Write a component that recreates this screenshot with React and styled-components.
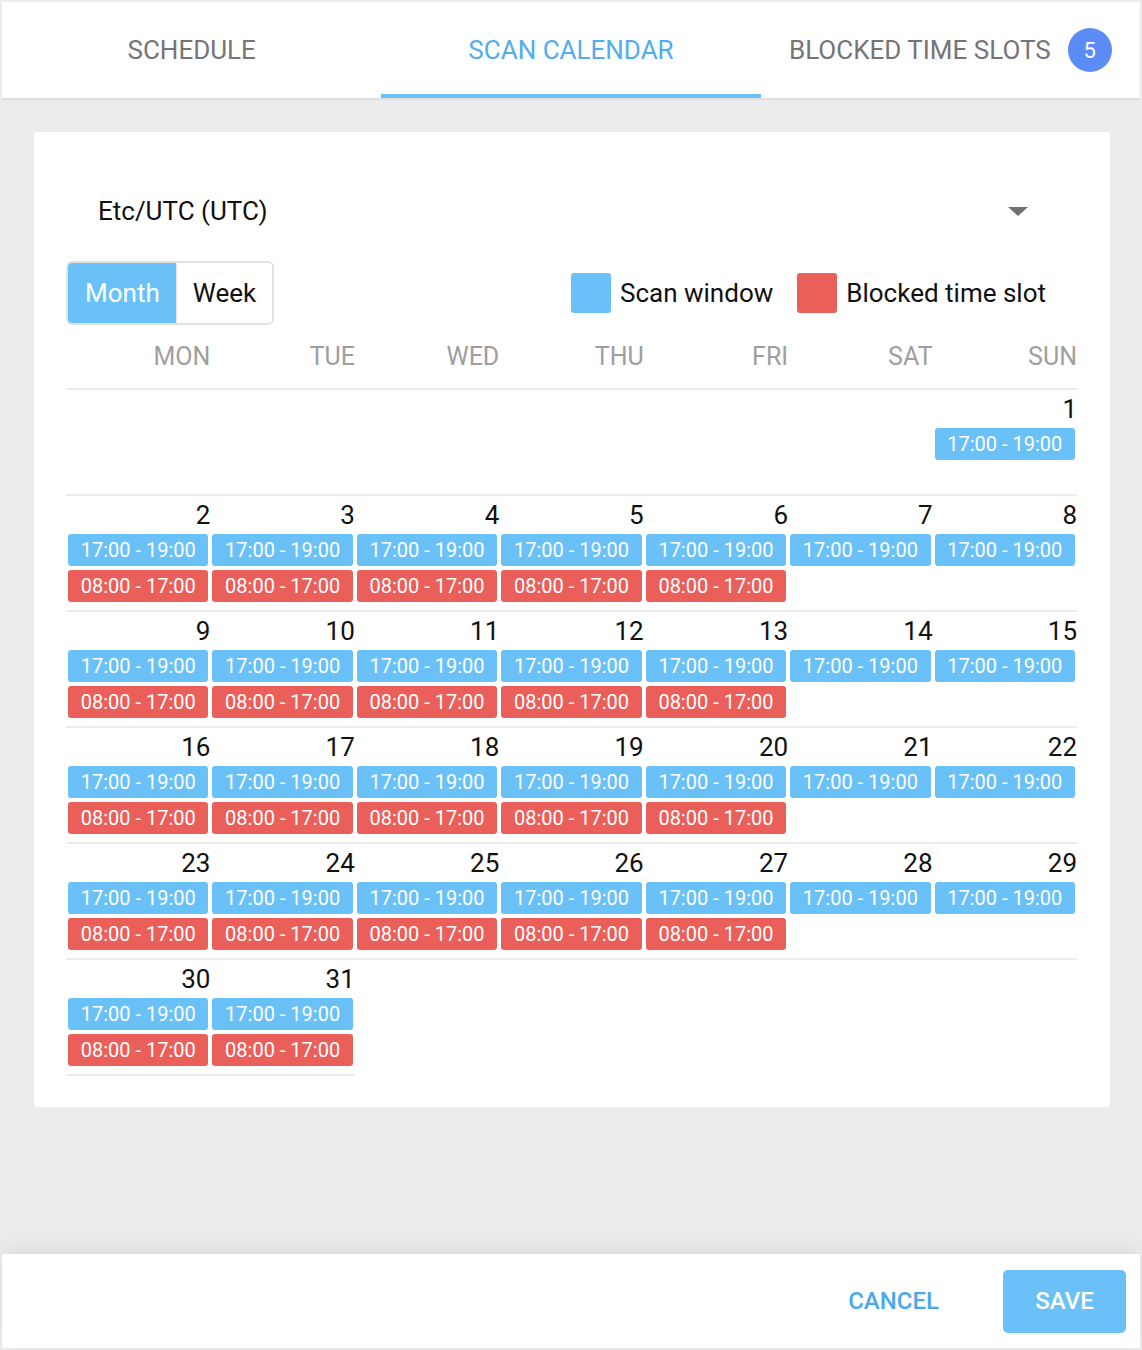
import React from "react";
import styled, { createGlobalStyle } from "styled-components";

const GlobalStyle = createGlobalStyle`
  * { box-sizing: border-box; }
  body {
    margin: 0;
    background: #ececec;
    font-family: Roboto, "Liberation Sans", Arial, sans-serif;
  }
`;

const BLUE = "#6ac1f8";
const RED = "#eb5f5a";

const Page = styled.div`
  height: 100vh;
  padding: 2px;
  display: flex;
  flex-direction: column;
`;

const TabBar = styled.div`
  display: flex;
  background: white;
  height: 98px;
  border-bottom: 2px solid #dedede;
`;

const Tab = styled.div`
  flex: 1;
  display: flex;
  align-items: center;
  justify-content: center;
  font-size: 26px;
  text-transform: uppercase;
  color: ${(p) => (p.active ? "#52acee" : "#757575")};
  border-bottom: 4px solid ${(p) => (p.active ? BLUE : "transparent")};
  padding-top: 4px;
`;

const Badge = styled.span`
  width: 44px;
  height: 44px;
  border-radius: 50%;
  background: #5b8cf5;
  color: white;
  font-size: 22px;
  display: flex;
  align-items: center;
  justify-content: center;
  margin-left: 17px;
`;

const Main = styled.div`
  flex: 1;
  padding: 32px 30px 0 32px;
`;

const Card = styled.div`
  background: white;
  border-radius: 4px;
  padding: 48px 33px 31px 32px;
`;

const Select = styled.div`
  height: 62px;
  display: flex;
  align-items: center;
  justify-content: space-between;
  padding: 0 49px 0 32px;
  font-size: 26px;
  color: #111;
`;

const Caret = styled.span`
  width: 0;
  height: 0;
  border-left: 10px solid transparent;
  border-right: 10px solid transparent;
  border-top: 9px solid #707070;
`;

const Controls = styled.div`
  margin-top: 19px;
  display: flex;
  align-items: center;
  justify-content: space-between;
`;

const Toggle = styled.div`
  display: flex;
  border: 2px solid #e2e2e2;
  border-radius: 6px;
  overflow: hidden;
  height: 64px;
`;

const ToggleButton = styled.div`
  display: flex;
  align-items: center;
  padding: 0 16px 0 ${(p) => (p.active ? 17 : 16)}px;
  font-size: 26px;
  background: ${(p) => (p.active ? BLUE : "white")};
  color: ${(p) => (p.active ? "white" : "#111")};
  & + & {
    border-left: 1px solid #e2e2e2;
  }
`;

const Legend = styled.div`
  display: flex;
  align-items: center;
  gap: 24px;
  padding-right: 31px;
`;

const LegendItem = styled.div`
  display: flex;
  align-items: center;
  gap: 9px;
  font-size: 26px;
  color: #111;
`;

const Swatch = styled.span`
  width: 40px;
  height: 40px;
  border-radius: 3px;
  background: ${(p) => p.color};
`;

const Grid = styled.div`
  display: grid;
  grid-template-columns: repeat(7, 1fr);
`;

const HeaderCell = styled.div`
  height: 65px;
  display: flex;
  align-items: center;
  justify-content: flex-end;
  font-size: 25px;
  color: #9e9e9e;
  border-bottom: 2px solid #ececec;
  padding-right: 0;
`;

const DayCell = styled.div`
  min-height: ${(p) => (p.short ? 106 : 0)}px;
  padding-bottom: 8px;
  border-bottom: 2px solid ${(p) => (p.blank ? "transparent" : "#ececec")};
  display: flex;
  flex-direction: column;
`;

const DayNumber = styled.div`
  margin-top: 5px;
  height: 28px;
  line-height: 28px;
  font-size: 26px;
  color: #111;
  text-align: right;
  padding-right: 0;
`;

const Chip = styled.div`
  margin: ${(p) => (p.first ? 5 : 4)}px 2px 0 2px;
  height: 32px;
  border-radius: 3px;
  background: ${(p) => (p.blocked ? RED : BLUE)};
  color: white;
  font-size: 20px;
  display: flex;
  align-items: center;
  justify-content: center;
`;

const Footer = styled.div`
  height: 94px;
  background: white;
  display: flex;
  align-items: center;
  justify-content: flex-end;
  gap: 64px;
  padding-right: 14px;
  box-shadow: 0 -6px 18px rgba(0, 0, 0, 0.07);
  position: relative;
`;

const TextButton = styled.div`
  font-size: 24px;
  font-weight: 500;
  color: #4aa8ec;
`;

const SaveButton = styled.div`
  width: 123px;
  height: 63px;
  border-radius: 5px;
  background: ${BLUE};
  color: white;
  font-size: 24px;
  font-weight: 500;
  display: flex;
  align-items: center;
  justify-content: center;
`;

const DAYS = ["MON", "TUE", "WED", "THU", "FRI", "SAT", "SUN"];

// month starts on a Sunday, 31 days
const cells = [];
for (let i = 0; i < 6; i++) cells.push(null);
for (let d = 1; d <= 31; d++) cells.push(d);
const weeks = [];
for (let i = 0; i < cells.length; i += 7) weeks.push(cells.slice(i, i + 7));

const App = () => {
  return (
    <>
      <GlobalStyle />
      <Page>
        <TabBar>
          <Tab>Schedule</Tab>
          <Tab active>Scan calendar</Tab>
          <Tab>
            Blocked time slots
            <Badge>5</Badge>
          </Tab>
        </TabBar>
        <Main>
          <Card>
            <Select>
              Etc/UTC (UTC)
              <Caret />
            </Select>
            <Controls>
              <Toggle>
                <ToggleButton active>Month</ToggleButton>
                <ToggleButton>Week</ToggleButton>
              </Toggle>
              <Legend>
                <LegendItem>
                  <Swatch color={BLUE} />
                  Scan window
                </LegendItem>
                <LegendItem>
                  <Swatch color={RED} />
                  Blocked time slot
                </LegendItem>
              </Legend>
            </Controls>
            <Grid>
              {DAYS.map((d) => (
                <HeaderCell key={d}>{d}</HeaderCell>
              ))}
              {weeks.map((week, wi) =>
                Array.from({ length: 7 }).map((_, ci) => {
                  const day = week[ci];
                  const isLastWeek = wi === weeks.length - 1;
                  if (day === undefined) {
                    return <DayCell key={`${wi}-${ci}`} blank />;
                  }
                  return (
                    <DayCell key={`${wi}-${ci}`} short={wi === 0 && !isLastWeek}>
                      {day !== null && (
                        <>
                          <DayNumber>{day}</DayNumber>
                          <Chip first>17:00 - 19:00</Chip>
                          {ci < 5 && <Chip blocked>08:00 - 17:00</Chip>}
                        </>
                      )}
                    </DayCell>
                  );
                })
              )}
            </Grid>
          </Card>
        </Main>
        <Footer>
          <TextButton>CANCEL</TextButton>
          <SaveButton>SAVE</SaveButton>
        </Footer>
      </Page>
    </>
  );
};

export default App;
